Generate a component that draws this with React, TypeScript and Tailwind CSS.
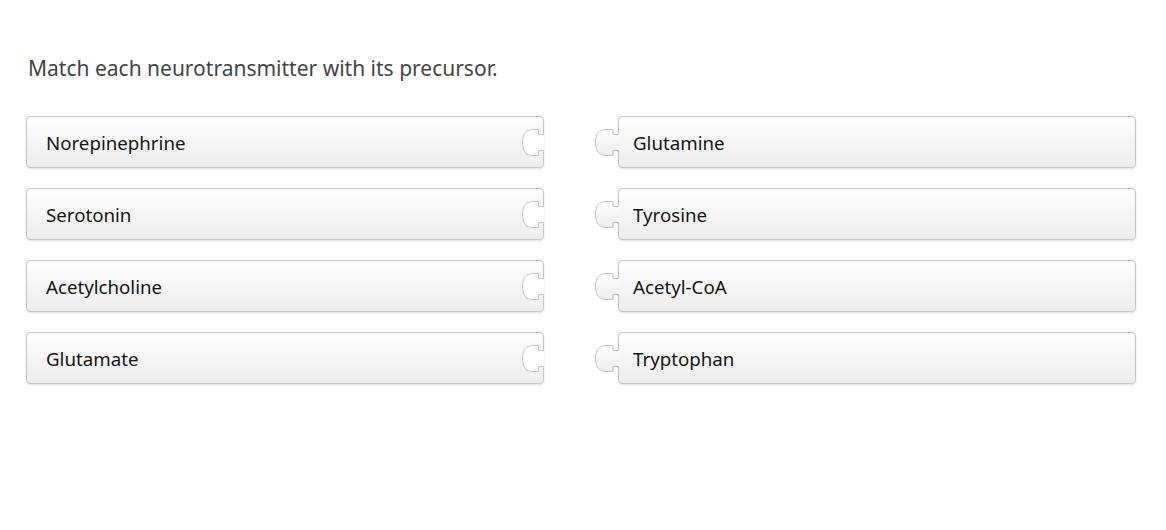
const PAIRS = [
  ["Norepinephrine", "Glutamine"],
  ["Serotonin", "Tyrosine"],
  ["Acetylcholine", "Acetyl-CoA"],
  ["Glutamate", "Tryptophan"],
] as const;

function Socket() {
  // concave notch cut into the right edge of a left-hand piece
  return (
    <svg className="absolute right-[-1px] top-[-1px]" width="24" height="52" viewBox="0 0 24 52">
      <path d="M24,18.5 H18.5 V13.5 H13 C6,13.5 2.5,18 2.5,26.5 C2.5,35 6,39.5 13,39.5 H18.5 V34.5 H24 Z" fill="#ffffff" />
      <path d="M24,18.5 H18.5 V13.5 H13 C6,13.5 2.5,18 2.5,26.5 C2.5,35 6,39.5 13,39.5 H18.5 V34.5 H24" fill="none" stroke="#c4c4c4" strokeWidth="1" />
    </svg>
  );
}

function Knob({ id }: { id: string }) {
  // tab sticking out of the left edge of a right-hand piece
  return (
    <svg className="absolute left-[-25px] top-[-1px]" width="26" height="52" viewBox="0 0 26 52">
      <defs>
        <linearGradient id={id} x1="0" y1="0" x2="0" y2="1">
          <stop offset="0" stopColor="#fefefe" />
          <stop offset="1" stopColor="#ededed" />
        </linearGradient>
      </defs>
      <path d="M26,18.5 H19 V13.5 H12 C5,13.5 1.5,18 1.5,26.5 C1.5,35 5,39.5 12,39.5 H19 V34.5 H26 Z" fill={`url(#${id})`} />
      <path d="M24.5,18.5 H19 V13.5 H12 C5,13.5 1.5,18 1.5,26.5 C1.5,35 5,39.5 12,39.5 H19 V34.5 H24.5" fill="none" stroke="#c4c4c4" strokeWidth="1" />
    </svg>
  );
}

function Piece({ label, side, idx }: { label: string; side: "left" | "right"; idx: number }) {
  return (
    <div
      className={`relative flex h-[52px] w-[518px] items-center rounded-[4px] border border-[#c4c4c4] bg-gradient-to-b from-[#fefefe] to-[#ededed] pt-[3px] text-[18.7px] text-[#141414] shadow-[0_1px_2px_rgba(0,0,0,0.12)] ${
        side === "left" ? "pl-[19px]" : "pl-[14px]"
      }`}
    >
      {side === "left" ? <Socket /> : <Knob id={`knob-${idx}`} />}
      <span>{label}</span>
    </div>
  );
}

export default function App() {
  return (
    <div className="min-h-[530px] bg-white pl-[26px] pt-[54px] font-['Noto_Sans',sans-serif]">
      <p className="pl-[2px] text-[21px] leading-[28px] text-[#444444]">Match each neurotransmitter with its precursor.</p>
      <div className="mt-[34px] flex gap-[74px]">
        <div className="flex flex-col gap-[20px]">
          {PAIRS.map(([l], i) => (
            <Piece key={l} label={l} side="left" idx={i} />
          ))}
        </div>
        <div className="flex flex-col gap-[20px]">
          {PAIRS.map(([, r], i) => (
            <Piece key={r} label={r} side="right" idx={i} />
          ))}
        </div>
      </div>
    </div>
  );
}
